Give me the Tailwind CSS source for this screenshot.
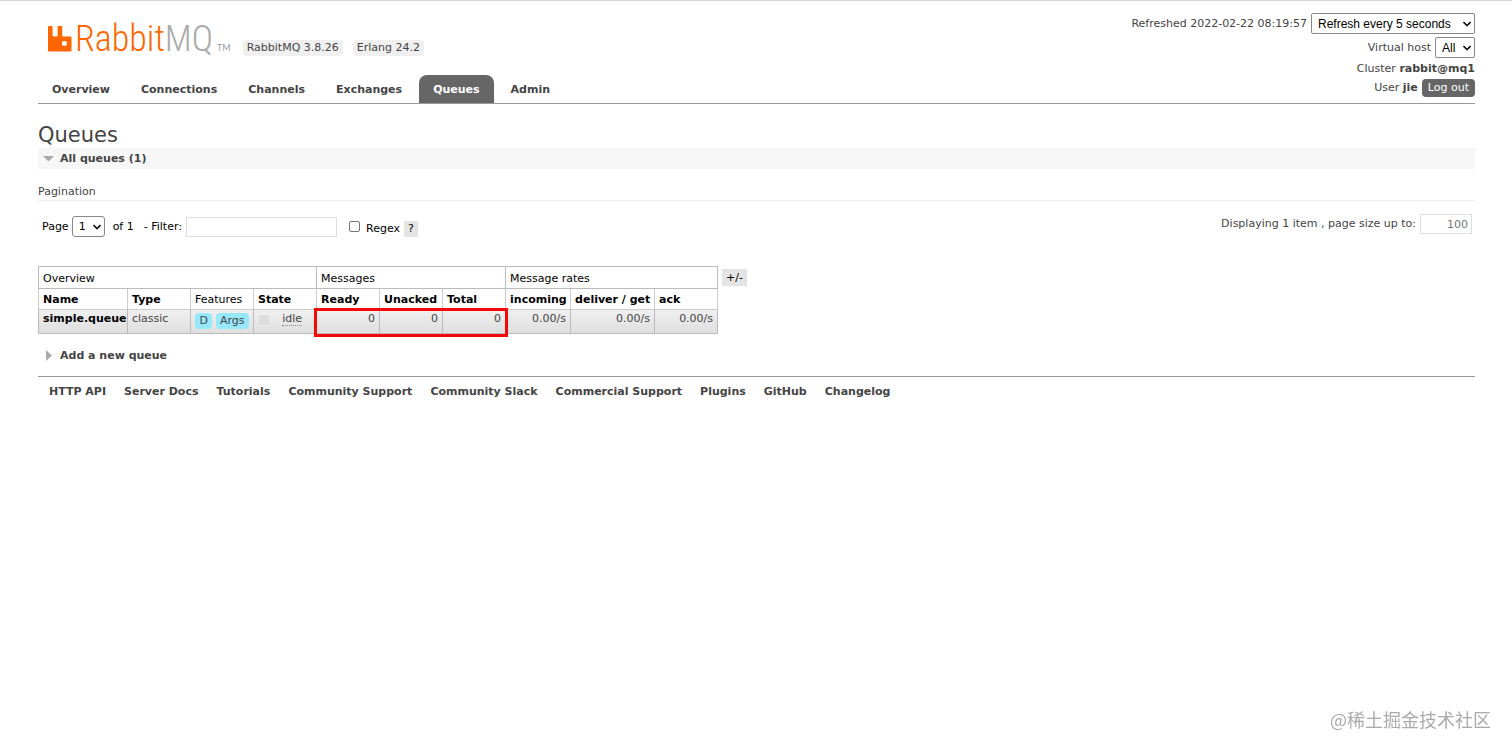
<!DOCTYPE html>
<html lang="en">
<head>
  <meta charset="UTF-8" />
  <meta name="viewport" content="width=device-width,initial-scale=1" />
  <title>RabbitMQ Management</title>
  <script src="https://cdn.jsdelivr.net/npm/@tailwindcss/browser@4"></script>
</head>
<body class="min-h-screen border-t border-[#d6d6d6] bg-white font-['DejaVu_Sans',sans-serif] text-[11px] leading-4 text-[#444]">

  <!-- Header: logo, tabs, session info -->
  <header class="mr-[37px] ml-[38px] flex h-[103px] justify-between border-b border-[#999]">
    <div class="flex flex-col justify-between">
      <div class="flex items-end pt-5 pl-2.5">
        <a href="#" class="flex items-end" aria-label="RabbitMQ">
          <svg class="mb-[5px] h-[26px] w-6" viewBox="0 0 24 26" fill="#f60">
            <path fill-rule="evenodd" d="M1 0h2.600a1 1 0 0 1 1 1v8.600a1 1 0 0 0 1 1h3a1 1 0 0 0 1-1V1a1 1 0 0 1 1-1h2.600a1 1 0 0 1 1 1v8.600a1 1 0 0 0 1 1H22.500a1 1 0 0 1 1 1V24.500a1 1 0 0 1-1 1H1a1 1 0 0 1-1-1V1A1 1 0 0 1 1 0zM15.500 15a1.500 1.500 0 0 0-1.500 1.500v1.800a1.500 1.500 0 0 0 1.500 1.500h1.800a1.500 1.500 0 0 0 1.500-1.500V16.500a1.500 1.500 0 0 0-1.500-1.500z" />
          </svg>
          <span class="pl-[3px] font-['Roboto_Condensed','Lato',sans-serif] text-[36px] leading-9 font-light text-[#f60]">Rabbit<span class="text-[#aaa]">MQ</span></span>
          <span class="mb-[3px] pl-1 font-['Lato',sans-serif] text-[9px] leading-3 text-[#999]">TM</span>
        </a>
        <ul class="mb-px flex gap-2.5 pl-3">
          <li class="rounded-sm bg-[#f0f0f0] px-1">RabbitMQ 3.8.26</li>
          <li class="rounded-sm bg-[#f0f0f0] px-1">Erlang 24.2</li>
        </ul>
      </div>
      <nav class="flex gap-[3px] leading-[26px] font-bold">
        <a href="#" class="px-3.5 pt-0.5">Overview</a>
        <a href="#" class="px-3.5 pt-0.5">Connections</a>
        <a href="#" class="px-3.5 pt-0.5">Channels</a>
        <a href="#" class="px-3.5 pt-0.5">Exchanges</a>
        <a href="#" class="rounded-t-lg bg-[#666] px-3.5 pt-0.5 text-white">Queues</a>
        <a href="#" class="px-3.5 pt-0.5">Admin</a>
      </nav>
    </div>

    <div class="flex flex-col items-end pt-3">
      <div class="mb-[3px] flex items-center gap-1">
        <label for="refresh">Refreshed 2022-02-22 08:19:57</label>
        <span class="relative">
          <select id="refresh" class="block h-[21px] w-[164px] appearance-none rounded-xs border border-[#888] bg-white pl-1.5 font-['Liberation_Sans',sans-serif] text-[12px] text-black">
            <option>Refresh every 5 seconds</option>
          </select>
          <svg class="pointer-events-none absolute top-[7px] right-1 h-2 w-2" viewBox="0 0 8 8" fill="none" stroke="#111" stroke-width="1.6"><path d="M.5 2l3.500 3.500L7.500 2" /></svg>
        </span>
      </div>
      <div class="mb-[3px] flex items-center gap-1">
        <label for="vhost">Virtual host</label>
        <span class="relative">
          <select id="vhost" class="block h-[21px] w-10 appearance-none rounded-xs border border-[#888] bg-white pl-1.5 font-['Liberation_Sans',sans-serif] text-[12px] text-black">
            <option>All</option>
          </select>
          <svg class="pointer-events-none absolute top-[7px] right-1 h-2 w-2" viewBox="0 0 8 8" fill="none" stroke="#111" stroke-width="1.6"><path d="M.5 2l3.500 3.500L7.500 2" /></svg>
        </span>
      </div>
      <div class="mb-0.5">Cluster <b>rabbit@mq1</b></div>
      <div class="flex items-center gap-1">
        <span>User <b>jie</b></span>
        <button class="h-[18px] rounded-sm bg-[#666] px-1.5 text-white">Log out</button>
      </div>
    </div>
  </header>

  <main class="mr-[37px] ml-[38px]">
    <h1 class="pt-[18px] text-[21px] leading-[26px]">Queues</h1>

    <h2 class="flex h-[21px] items-center bg-[#f7f7f7] pl-[5px] font-bold">
      <svg class="mr-1.5 h-[11px] w-[11px]" viewBox="0 0 11 11" fill="#aaa"><path d="M0 3h11L5.500 8.500z" /></svg>
      All queues (1)
    </h2>

    <h3 class="mt-[15px] border-b border-[#eee]">Pagination</h3>

    <div class="flex items-start justify-between pr-[3px] pl-1">
      <div class="flex items-center pt-[15px] text-black">
        <label for="page">Page</label>
        <span class="relative ml-[3px]">
          <select id="page" class="block h-[21px] w-[33px] appearance-none rounded-[3px] border border-[#888] bg-white pl-1.5 text-black">
            <option>1</option>
          </select>
          <svg class="pointer-events-none absolute top-[7px] right-1 h-2 w-2" viewBox="0 0 8 8" fill="none" stroke="#111" stroke-width="1.6"><path d="M.5 2l3.500 3.500L7.500 2" /></svg>
        </span>
        <span class="ml-2">of 1</span>
        <label for="filter" class="ml-2.5">- Filter:</label>
        <input id="filter" type="text" class="ml-1 h-5 w-[151px] border border-[#ddd] px-1" />
        <input id="regex" type="checkbox" class="ml-3 h-[11px] w-[11px] appearance-none rounded-xs border border-[#777] bg-white" />
        <label for="regex" class="mt-1 ml-1.5">Regex</label>
        <button class="mt-1 ml-1 h-4 bg-[#e4e4e4] px-1">?</button>
      </div>
      <div class="flex items-center gap-1 pt-[13px]">
        <label for="pagesize">Displaying 1 item , page size up to:</label>
        <input id="pagesize" type="text" value="100" class="h-5 w-[52px] border border-[#ddd] pr-[3px] text-right text-[#777]" />
      </div>
    </div>

    <!-- Queue list -->
    <div class="flex items-start pt-[29px]">
      <div class="relative">
        <table class="w-[680px] table-fixed border-collapse text-left text-black">
          <colgroup>
            <col class="w-[89px]" />
            <col class="w-[63px]" />
            <col class="w-[63px]" />
            <col class="w-[63px]" />
            <col class="w-[63px]" />
            <col class="w-[63px]" />
            <col class="w-[63px]" />
            <col class="w-[65px]" />
            <col class="w-[84px]" />
            <col class="w-[63px]" />
          </colgroup>
          <thead>
            <tr class="h-[22px]">
              <th colspan="4" class="border border-[#bbb] px-1 pt-0.5 font-normal">Overview</th>
              <th colspan="3" class="border border-[#bbb] px-1 pt-0.5 font-normal">Messages</th>
              <th colspan="3" class="border border-[#bbb] px-1 pt-0.5 font-normal">Message rates</th>
            </tr>
            <tr class="h-[21px] whitespace-nowrap">
              <th class="border border-[#ccc] px-1 pt-0.5">Name</th>
              <th class="border border-[#ccc] px-1 pt-0.5">Type</th>
              <th class="border border-[#ccc] px-1 pt-0.5 font-normal">Features</th>
              <th class="border border-[#ccc] px-1 pt-0.5">State</th>
              <th class="border border-[#ccc] px-1 pt-0.5">Ready</th>
              <th class="border border-[#ccc] px-1 pt-0.5">Unacked</th>
              <th class="border border-[#ccc] px-1 pt-0.5">Total</th>
              <th class="border border-[#ccc] px-1 pt-0.5">incoming</th>
              <th class="border border-[#ccc] px-1 pt-0.5">deliver / get</th>
              <th class="border border-[#ccc] px-1 pt-0.5">ack</th>
            </tr>
          </thead>
          <tbody>
            <tr class="h-6 bg-linear-to-b from-[#f0f0f0] to-[#dedede] align-top whitespace-nowrap text-[#444]">
              <td class="border border-[#bbb] px-1 pt-px font-bold text-black"><a href="#">simple.queue</a></td>
              <td class="border border-[#bbb] px-1 pt-px">classic</td>
              <td class="border border-[#bbb] px-1 pt-px">
                <div class="flex justify-center gap-1 pt-0.5">
                  <span class="rounded-sm bg-[#98e8fb] px-1">D</span>
                  <span class="rounded-sm bg-[#98e8fb] px-1">Args</span>
                </div>
              </td>
              <td class="border border-[#bbb] px-1 pt-px">
                <div class="flex justify-between pr-2.5 pl-px">
                  <span class="mt-1 h-2.5 w-2.5 bg-[#ddd]"></span>
                  <span class="h-[15px] border-b border-dotted border-[#888]">idle</span>
                </div>
              </td>
              <td class="border border-[#bbb] px-1 pt-px text-right">0</td>
              <td class="border border-[#bbb] px-1 pt-px text-right">0</td>
              <td class="border border-[#bbb] px-1 pt-px text-right">0</td>
              <td class="border border-[#bbb] px-1 pt-px text-right">0.00/s</td>
              <td class="border border-[#bbb] px-1 pt-px text-right">0.00/s</td>
              <td class="border border-[#bbb] px-1 pt-px text-right">0.00/s</td>
            </tr>
          </tbody>
        </table>
        <!-- message count highlight -->
        <div class="pointer-events-none absolute top-[42px] left-[276px] h-[29px] w-[194px] border-3 border-[#f50808]"></div>
      </div>
      <button class="mt-[3px] ml-1 h-[17px] bg-[#e4e4e4] px-1 text-black">+/-</button>
    </div>

    <h2 class="mt-[11px] flex h-[21px] items-center pl-[5px] font-bold">
      <svg class="mr-1.5 h-[11px] w-[11px]" viewBox="0 0 11 11" fill="#aaa"><path d="M3 0v11l6-5.500z" /></svg>
      Add a new queue
    </h2>
  </main>

  <footer class="mt-2.5 mr-[37px] ml-[38px] border-t border-[#999] pt-[7px] pl-[11px]">
    <ul class="flex gap-[18px] font-bold">
      <li><a href="#">HTTP API</a></li>
      <li><a href="#">Server Docs</a></li>
      <li><a href="#">Tutorials</a></li>
      <li><a href="#">Community Support</a></li>
      <li><a href="#">Community Slack</a></li>
      <li><a href="#">Commercial Support</a></li>
      <li><a href="#">Plugins</a></li>
      <li><a href="#">GitHub</a></li>
      <li><a href="#">Changelog</a></li>
    </ul>
  </footer>

  <div class="fixed right-[21px] bottom-[21px] font-['Noto_Sans_CJK_SC',sans-serif] text-[18px] leading-6 text-[#aaa]" lang="zh">@稀土掘金技术社区</div>
</body>
</html>
